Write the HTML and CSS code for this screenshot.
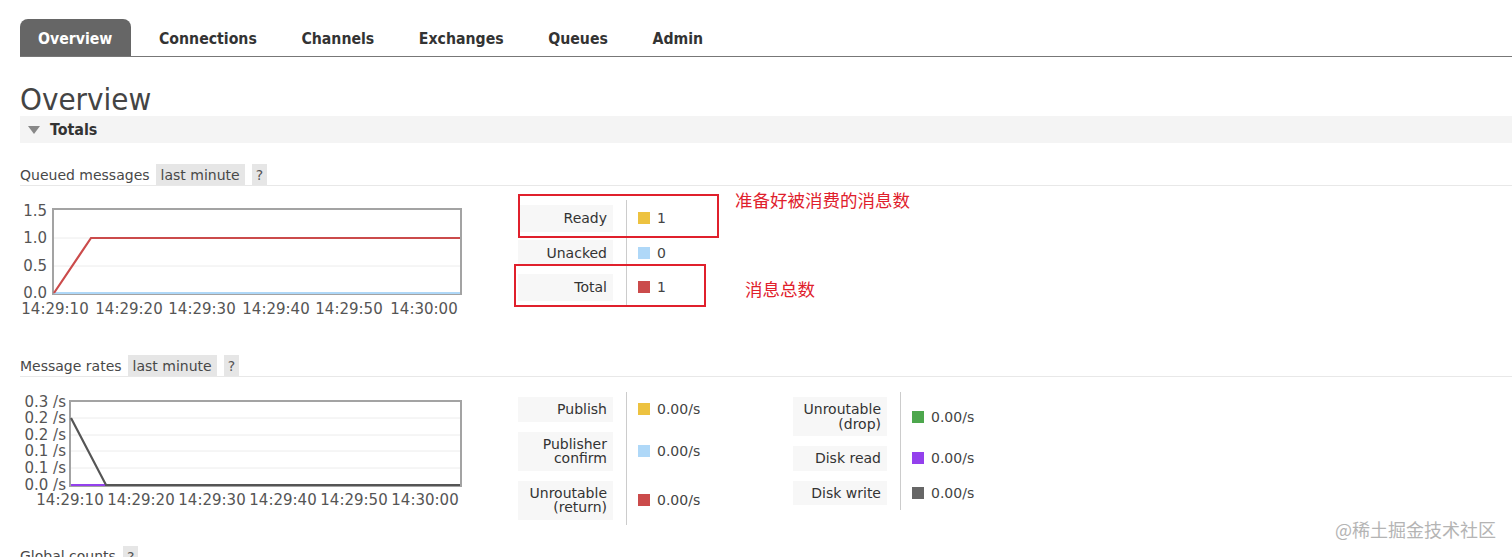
FILE: index.html
```html
<!DOCTYPE html>
<html lang="en">
<head>
<meta charset="utf-8">
<title>Overview</title>
<link rel="stylesheet" href="styles.css">
</head>
<body>
<div class="page">
  <nav class="tabs">
    <a class="tab active">Overview</a>
    <a class="tab">Connections</a>
    <a class="tab">Channels</a>
    <a class="tab">Exchanges</a>
    <a class="tab">Queues</a>
    <a class="tab">Admin</a>
  </nav>

  <h1 class="title">Overview</h1>
  <div class="section-bar"><span class="tri"></span><span>Totals</span></div>

  <div class="sub-head q-head">
    <span>Queued messages</span>
    <span class="pill">last minute</span>
    <span class="pill q">?</span>
  </div>

  <div class="chart-row q-row">
    <svg class="chart" width="446" height="120" viewBox="0 0 446 120">
      <rect x="33" y="9" width="408" height="85" fill="#fff" stroke="#a3a3a3" stroke-width="2"/>
      <line x1="34" y1="38" x2="440" y2="38" stroke="#ececec" stroke-width="1"/>
      <line x1="34" y1="66" x2="440" y2="66" stroke="#ececec" stroke-width="1"/>
      <line x1="34" y1="93" x2="440" y2="93" stroke="#afd8f8" stroke-width="2"/>
      <polyline points="34,93 71,38 440,38" fill="none" stroke="#cb4b4b" stroke-width="2.2"/>
      <g class="axis" text-anchor="end">
        <text x="27" y="16">1.5</text>
        <text x="27" y="43">1.0</text>
        <text x="27" y="71">0.5</text>
        <text x="27" y="98">0.0</text>
      </g>
      <g class="axis" text-anchor="middle">
        <text x="35" y="114">14:29:10</text>
        <text x="109" y="114">14:29:20</text>
        <text x="182" y="114">14:29:30</text>
        <text x="256" y="114">14:29:40</text>
        <text x="329" y="114">14:29:50</text>
        <text x="404" y="114">14:30:00</text>
      </g>
    </svg>

    <div class="legends">
      <div class="legend q-legend">
        <div class="cell"><div class="lbl tall">Ready</div></div>
        <div class="val"><i class="sw yellow"></i>1</div>
        <div class="cell"><div class="lbl tall">Unacked</div></div>
        <div class="val"><i class="sw blue"></i>0</div>
        <div class="cell"><div class="lbl tall">Total</div></div>
        <div class="val"><i class="sw red"></i>1</div>
      </div>
      <div class="mark mark-ready"></div>
      <div class="mark mark-total"></div>
      <div class="note note-ready">准备好被消费的消息数</div>
      <div class="note note-total">消息总数</div>
    </div>
  </div>

  <div class="sub-head r-head">
    <span>Message rates</span>
    <span class="pill">last minute</span>
    <span class="pill q">?</span>
  </div>

  <div class="chart-row r-row">
    <svg class="chart" width="446" height="120" viewBox="0 0 446 120">
      <rect x="50" y="9" width="391" height="85" fill="#fff" stroke="#a3a3a3" stroke-width="2"/>
      <line x1="51" y1="26" x2="440" y2="26" stroke="#ececec" stroke-width="1"/>
      <line x1="51" y1="43" x2="440" y2="43" stroke="#ececec" stroke-width="1"/>
      <line x1="51" y1="59" x2="440" y2="59" stroke="#ececec" stroke-width="1"/>
      <line x1="51" y1="76" x2="440" y2="76" stroke="#ececec" stroke-width="1"/>
      <line x1="51" y1="93" x2="86" y2="93" stroke="#9440ed" stroke-width="2.2"/>
      <polyline points="51,26 86,93 440,93" fill="none" stroke="#555" stroke-width="2.2"/>
      <g class="axis" text-anchor="end">
        <text x="46" y="15">0.3 /s</text>
        <text x="46" y="31">0.2 /s</text>
        <text x="46" y="48">0.2 /s</text>
        <text x="46" y="64">0.1 /s</text>
        <text x="46" y="81">0.1 /s</text>
        <text x="46" y="98">0.0 /s</text>
      </g>
      <g class="axis" text-anchor="middle">
        <text x="50" y="113">14:29:10</text>
        <text x="121" y="113">14:29:20</text>
        <text x="192" y="113">14:29:30</text>
        <text x="263" y="113">14:29:40</text>
        <text x="334" y="113">14:29:50</text>
        <text x="405" y="113">14:30:00</text>
      </g>
    </svg>

    <div class="legends">
      <div class="legend r-legend wide">
        <div class="cell"><div class="lbl">Publish</div></div>
        <div class="val"><i class="sw yellow"></i>0.00/s</div>
        <div class="cell"><div class="lbl">Publisher<br>confirm</div></div>
        <div class="val"><i class="sw blue"></i>0.00/s</div>
        <div class="cell"><div class="lbl">Unroutable<br>(return)</div></div>
        <div class="val"><i class="sw red"></i>0.00/s</div>
      </div>
      <div class="legend r-legend narrow">
        <div class="cell"><div class="lbl">Unroutable<br>(drop)</div></div>
        <div class="val"><i class="sw green"></i>0.00/s</div>
        <div class="cell"><div class="lbl">Disk read</div></div>
        <div class="val"><i class="sw purple"></i>0.00/s</div>
        <div class="cell"><div class="lbl">Disk write</div></div>
        <div class="val"><i class="sw gray"></i>0.00/s</div>
      </div>
    </div>
  </div>

  <div class="sub-head g-head">
    <span>Global counts</span>
    <span class="pill q">?</span>
  </div>
</div>
<div class="watermark">@稀土掘金技术社区</div>
</body>
</html>
```

FILE: styles.css
```css
html, body {
  margin: 0;
  padding: 0;
  background: #fff;
}
body {
  font-family: "DejaVu Sans", Verdana, sans-serif;
  color: #444;
  overflow: hidden;
  height: 557px;
  position: relative;
}
.page {
  padding: 19px 0 0 20px;
}

/* tabs */
.tabs {
  display: flex;
  gap: 10.6px;
  border-bottom: 1px solid #777;
  height: 37px;
}
.tab {
  display: block;
  padding: 0 17px;
  height: 37px;
  line-height: 39px;
  font-family: "DejaVu Sans Condensed", "DejaVu Sans", sans-serif;
  font-weight: bold;
  font-size: 15.7px;
  color: #333;
}
.tab.active {
  background: #666;
  color: #fff;
  border-radius: 8px 8px 0 0;
  padding: 0 19px 0 18px;
}

.title {
  margin: 26px 0 0;
  height: 33px;
  line-height: 33px;
  font-family: "DejaVu Sans Condensed", "DejaVu Sans", sans-serif;
  font-weight: normal;
  font-size: 31px;
  color: #444;
}

.section-bar {
  height: 27px;
  background: #f4f4f4;
  display: flex;
  align-items: center;
  gap: 10px;
  padding-left: 8px;
  font-family: "DejaVu Sans Condensed", "DejaVu Sans", sans-serif;
  font-weight: bold;
  font-size: 15.9px;
  color: #333;
}
.tri {
  width: 0;
  height: 0;
  border-left: 6px solid transparent;
  border-right: 6px solid transparent;
  border-top: 8px solid #888;
  margin-top: 1px;
}

/* sub headings */
.sub-head {
  display: flex;
  align-items: center;
  height: 21px;
  border-bottom: 1px solid #e8e8e8;
  font-size: 14px;
  color: #484848;
}
.sub-head .pill {
  background: #e6e6e6;
  height: 21px;
  line-height: 22px;
  padding: 0 5px;
  margin-left: 6px;
}
.sub-head .pill.q {
  margin-left: 7px;
  padding: 0 4px;
  color: #555;
}
.q-head { margin-top: 21px; }
.r-head { margin-top: 35px; }
.g-head { margin-top: 21px; border-bottom: none; }

/* charts */
.chart-row {
  display: flex;
  align-items: flex-start;
}
.q-row { margin-top: 14px; }
.r-row { margin-top: 15px; }
.chart {
  display: block;
  flex: none;
}
.axis text {
  font-family: "DejaVu Sans", sans-serif;
  font-size: 15px;
  fill: #555;
}

.legends {
  position: relative;
  display: flex;
  align-items: flex-start;
  margin-left: 52px;
}
.legend {
  display: grid;
  grid-template-columns: 95px auto;
  align-items: stretch;
}
.legend.wide { grid-template-columns: 95px 180px; }
.legend.narrow { grid-template-columns: 94px auto; }
.cell {
  padding: 5px 0;
  display: flex;
  align-items: flex-start;
}
.q-legend .cell { padding: 4px 0; }
.q-legend .cell:first-child { padding-top: 5px; }
.lbl {
  width: 100%;
  background: #f7f7f7;
  text-align: right;
  padding: 5px 6px;
  line-height: 14.5px;
  font-size: 14px;
  color: #333;
  box-sizing: border-box;
}
.lbl.tall {
  padding: 6px 6px;
}
.val {
  margin-left: 13px;
  border-left: 1px solid #ccc;
  padding-left: 11px;
  display: flex;
  align-items: center;
  gap: 7px;
  font-size: 14px;
  color: #444;
}
.sw {
  display: inline-block;
  width: 12px;
  height: 12px;
}
.yellow { background: #edc240; }
.blue { background: #afd8f8; }
.red { background: #cb4b4b; }
.green { background: #4da74d; }
.purple { background: #9440ed; }
.gray { background: #666; }

/* annotations */
.mark {
  position: absolute;
  border: 2px solid #e0202c;
  box-sizing: border-box;
}
.mark-ready { left: 0; top: -6px; width: 201px; height: 44px; }
.mark-total { left: -4px; top: 64px; width: 192px; height: 43px; }
.note {
  position: absolute;
  font-family: "Noto Sans CJK SC", sans-serif;
  font-size: 17.5px;
  line-height: 22px;
  color: #e0202c;
  white-space: nowrap;
}
.note-ready { left: 217px; top: -11px; }
.note-total { left: 227px; top: 78px; }

.watermark {
  position: absolute;
  left: 1335px;
  top: 517px;
  font-family: "Noto Sans CJK SC", sans-serif;
  font-size: 18px;
  line-height: 24px;
  color: #b4b4b4;
  text-shadow: 0 0 1px #fff;
  white-space: nowrap;
}
```
